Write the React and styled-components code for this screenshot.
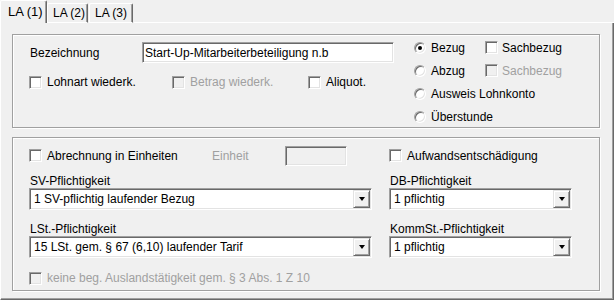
import React from "react";
import styled, { createGlobalStyle } from "styled-components";

const GlobalStyle = createGlobalStyle`
  html, body {
    margin: 0;
    padding: 0;
    background: #f0f0f0;
  }
  body {
    font-family: "Liberation Sans", Arial, sans-serif;
    font-size: 12px;
    color: #000;
  }
`;

const Window = styled.div`
  width: 614px;
  height: 300px;
  display: flex;
  flex-direction: column;
  background: #f0f0f0;
  overflow: hidden;
`;

const TabStrip = styled.div`
  display: flex;
  align-items: flex-end;
  height: 23px;
  flex: none;
`;

const Tab = styled.div`
  box-sizing: border-box;
  width: ${(p) => p.$w}px;
  height: ${(p) => (p.$active ? 23 : 20)}px;
  padding: ${(p) => (p.$active ? "0 0 2px 7px" : "0 0 0 5px")};
  margin-right: ${(p) => (p.$active ? 0 : 1)}px;
  display: flex;
  align-items: center;
  white-space: nowrap;
  font-size: ${(p) => (p.$active ? 13 : 12)}px;
  border-top: 1px solid #fff;
  border-left: 1px solid #fff;
  border-right: 1px solid #696969;
  border-bottom: ${(p) => (p.$active ? "none" : "1px solid #fff")};
  box-shadow: inset -1px 0 0 #a0a0a0;
  border-radius: 2px 2px 0 0;
`;

const TabFiller = styled.div`
  flex: 1;
  border-bottom: 1px solid #fff;
`;

const Panel = styled.div`
  flex: 1;
  box-sizing: border-box;
  border-left: 1px solid #fff;
  border-right: 1px solid #696969;
  border-bottom: 1px solid #696969;
  box-shadow: inset -1px -1px 0 #a0a0a0;
  padding: 11px 0 0 11px;
  display: flex;
  flex-direction: column;
  gap: 9px;
`;

const Group = styled.div`
  box-sizing: border-box;
  width: 588px;
  height: ${(p) => p.$h}px;
  border: 1px solid #a0a0a0;
  box-shadow: 1px 1px 0 #fff, inset 1px 1px 0 #fff;
`;

const TopGroup = styled(Group)`
  display: flex;
  padding-left: 16px;
`;

const LeftCol = styled.div`
  width: 365px;
  display: flex;
  flex-direction: column;
`;

const NameRow = styled.div`
  display: flex;
  align-items: center;
  height: 21px;
  margin-top: 7px;
`;

const FlagRow = styled.div`
  display: flex;
  align-items: center;
  height: 20px;
  margin-top: 9px;
`;

const FieldLabel = styled.div`
  width: ${(p) => p.$w}px;
  padding-left: ${(p) => p.$pl || 0}px;
  box-sizing: border-box;
  color: ${(p) => (p.$disabled ? "#a0a0a0" : "#000")};
  white-space: nowrap;
`;

const TextBox = styled.input`
  box-sizing: border-box;
  width: ${(p) => p.$w}px;
  height: ${(p) => p.$h}px;
  margin: 0;
  padding: 0 2px;
  font: inherit;
  color: #000;
  background: ${(p) => (p.disabled ? "#f0f0f0" : "#fff")};
  border: 1px solid;
  border-color: #a0a0a0 #fff #fff #a0a0a0;
  box-shadow: inset 1px 1px 0 #696969, inset -1px -1px 0 #e3e3e3;
  outline: none;
`;

const RadioCol = styled.div`
  margin-left: 20px;
  padding-top: 1px;
  display: grid;
  grid-template-columns: 71px auto;
  grid-auto-rows: 23px;
  align-items: center;
`;

const Item = styled.label`
  display: flex;
  align-items: center;
  gap: ${(p) => p.$gap || 5}px;
  width: ${(p) => (p.$w ? `${p.$w}px` : "auto")};
  color: ${(p) => (p.$disabled ? "#a0a0a0" : "#000")};
  white-space: nowrap;
  grid-column: ${(p) => p.$span || "auto"};
`;

const Box = styled.span`
  box-sizing: border-box;
  width: 13px;
  height: 13px;
  flex: none;
  background: ${(p) => (p.$disabled ? "#f0f0f0" : "#fff")};
  border: 1px solid;
  border-color: #a0a0a0 #fff #fff #a0a0a0;
  box-shadow: inset 1px 1px 0 #696969, inset -1px -1px 0 #e3e3e3;
`;

const Radio = styled.span`
  box-sizing: border-box;
  width: 12px;
  height: 12px;
  flex: none;
  border-radius: 50%;
  background: #fff;
  border: 1px solid;
  border-color: #a0a0a0 #fff #fff #a0a0a0;
  box-shadow: inset 1px 1px 0 #696969, inset -1px -1px 0 #e3e3e3;
  display: flex;
  align-items: center;
  justify-content: center;
  &::after {
    content: "";
    width: 4px;
    height: 4px;
    border-radius: 50%;
    background: ${(p) => (p.$on ? "#000" : "transparent")};
  }
`;

const BottomGroup = styled(Group)`
  padding: 7px 0 0 16px;
  display: grid;
  grid-template-columns: 343px 183px;
  grid-template-rows: 21px auto auto auto;
  align-content: start;
  column-gap: 17px;
  row-gap: 0;
`;

const UnitRow = styled.div`
  display: flex;
  align-items: center;
`;

const Field = styled.div`
  display: flex;
  flex-direction: column;
  margin-top: ${(p) => p.$mt}px;
`;

const SmallLabel = styled.div`
  height: 14px;
  line-height: 14px;
  padding-left: 1px;
`;

const Combo = styled.div`
  box-sizing: border-box;
  height: 22px;
  display: flex;
  align-items: center;
  background: #fff;
  border: 1px solid;
  border-color: #a0a0a0 #fff #fff #a0a0a0;
  box-shadow: inset 1px 1px 0 #696969, inset -1px -1px 0 #e3e3e3;
  padding: 1px 1px 1px 4px;
`;

const ComboText = styled.span`
  flex: 1;
  white-space: nowrap;
  overflow: hidden;
`;

const ComboButton = styled.span`
  box-sizing: border-box;
  width: 17px;
  height: 18px;
  flex: none;
  background: #f0f0f0;
  border: 1px solid;
  border-color: #e3e3e3 #696969 #696969 #e3e3e3;
  box-shadow: inset 1px 1px 0 #fff, inset -1px -1px 0 #a0a0a0;
  display: flex;
  align-items: center;
  justify-content: center;
  &::after {
    content: "";
    width: 0;
    height: 0;
    border-left: 3.5px solid transparent;
    border-right: 3.5px solid transparent;
    border-top: 4px solid #000;
  }
`;

const FootRow = styled.div`
  grid-column: 1 / span 2;
  height: 20px;
  display: flex;
  align-items: center;
  margin-top: 10px;
`;

function Check({ label, disabled, w, gap }) {
  return (
    <Item $disabled={disabled} $w={w} $gap={gap}>
      <Box $disabled={disabled} />
      {label}
    </Item>
  );
}

function Option({ label, on }) {
  return (
    <Item $gap={5}>
      <Radio $on={on} />
      {label}
    </Item>
  );
}

function Select({ label, value, mt }) {
  return (
    <Field $mt={mt}>
      <SmallLabel>{label}</SmallLabel>
      <Combo>
        <ComboText>{value}</ComboText>
        <ComboButton />
      </Combo>
    </Field>
  );
}

export default function App() {
  return (
    <Window>
      <GlobalStyle />
      <TabStrip>
        <Tab $active $w={47}>LA (1)</Tab>
        <Tab $w={41}>LA (2)</Tab>
        <Tab $w={44}>LA (3)</Tab>
        <TabFiller />
      </TabStrip>
      <Panel>
        <TopGroup $h={94}>
          <LeftCol>
            <NameRow>
              <FieldLabel $w={113} $pl={1}>Bezeichnung</FieldLabel>
              <TextBox $w={252} $h={21} readOnly value="Start-Up-Mitarbeiterbeteiligung n.b" />
            </NameRow>
            <FlagRow>
              <Check label="Lohnart wiederk." w={143} />
              <Check label="Betrag wiederk." disabled w={136} />
              <Check label="Aliquot." />
            </FlagRow>
          </LeftCol>
          <RadioCol>
            <Option label="Bezug" on />
            <Check label="Sachbezug" gap={4} />
            <Option label="Abzug" />
            <Check label="Sachbezug" disabled gap={4} />
            <Item $span="1 / span 2" $gap={5}>
              <Radio />
              Ausweis Lohnkonto
            </Item>
            <Item $span="1 / span 2" $gap={5}>
              <Radio />
              Überstunde
            </Item>
          </RadioCol>
        </TopGroup>
        <BottomGroup $h={154}>
          <UnitRow>
            <Check label="Abrechnung in Einheiten" w={183} />
            <FieldLabel $w={73} $disabled>Einheit</FieldLabel>
            <TextBox $w={62} $h={20} disabled readOnly value="" />
          </UnitRow>
          <UnitRow>
            <Check label="Aufwandsentschädigung" />
          </UnitRow>
          <Select label="SV-Pflichtigkeit" value="1 SV-pflichtig laufender Bezug" mt={8} />
          <Select label="DB-Pflichtigkeit" value="1 pflichtig" mt={8} />
          <Select label="LSt.-Pflichtigkeit" value="15 LSt. gem. § 67 (6,10) laufender Tarif" mt={12} />
          <Select label="KommSt.-Pflichtigkeit" value="1 pflichtig" mt={12} />
          <FootRow>
            <Check label="keine beg. Auslandstätigkeit gem. § 3 Abs. 1 Z 10" disabled />
          </FootRow>
        </BottomGroup>
      </Panel>
    </Window>
  );
}
